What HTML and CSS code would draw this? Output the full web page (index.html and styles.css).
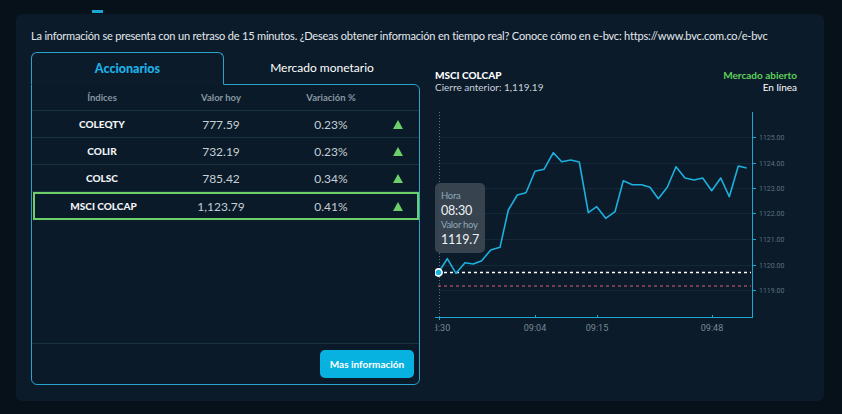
FILE: index.html
```html
<!DOCTYPE html>
<html lang="es">
<head>
<meta charset="utf-8">
<title>BVC índices</title>
<link rel="stylesheet" href="styles.css">
</head>
<body>
<div class="topbar"><span class="indicator"></span></div>
<section class="card">
  <p class="notice">La información se presenta con un retraso de 15 minutos. ¿Deseas obtener información en tiempo real? Conoce cómo en e-bvc: https://www.bvc.com.co/e-bvc</p>
  <div class="content">
    <div class="left">
      <div class="tabs">
        <div class="tab active">Accionarios</div>
        <div class="tab">Mercado monetario</div>
      </div>
      <div class="panel">
        <div class="table">
          <div class="row head">
            <span>Índices</span><span>Valor hoy</span><span>Variación %</span><span></span>
          </div>
          <div class="row">
            <span class="name">COLEQTY</span><span class="num">777.59</span><span class="num">0.23%</span><span class="up"></span>
          </div>
          <div class="row">
            <span class="name">COLIR</span><span class="num">732.19</span><span class="num">0.23%</span><span class="up"></span>
          </div>
          <div class="row">
            <span class="name">COLSC</span><span class="num">785.42</span><span class="num">0.34%</span><span class="up"></span>
          </div>
          <div class="row selected">
            <span class="name">MSCI COLCAP</span><span class="num">1,123.79</span><span class="num">0.41%</span><span class="up"></span>
          </div>
        </div>
        <div class="panel-footer">
          <button class="more">Mas información</button>
        </div>
      </div>
    </div>
    <div class="right">
      <div class="chart-head">
        <div>
          <div class="title">MSCI COLCAP</div>
          <div class="sub">Cierre anterior: 1,119.19</div>
        </div>
        <div class="status">
          <div class="open">Mercado abierto</div>
          <div class="sub white">En línea</div>
        </div>
      </div>
      <div class="chart">
        <svg class="plot" width="362" height="250" viewBox="435 100 362 250" xmlns="http://www.w3.org/2000/svg">
          <defs>
            <clipPath id="xclip"><rect x="435.5" y="318" width="400" height="30"/></clipPath>
          </defs>
          <g stroke="#13293a" stroke-width="1">
            <line x1="438" y1="137.5" x2="752" y2="137.5"/>
            <line x1="438" y1="163.5" x2="752" y2="163.5"/>
            <line x1="438" y1="188.5" x2="752" y2="188.5"/>
            <line x1="438" y1="213.5" x2="752" y2="213.5"/>
            <line x1="438" y1="239.5" x2="752" y2="239.5"/>
            <line x1="438" y1="265.5" x2="752" y2="265.5"/>
            <line x1="438" y1="290.5" x2="752" y2="290.5"/>
          </g>
          <line x1="439.5" y1="112" x2="439.5" y2="317" stroke="#5d6e7c" stroke-width="1" stroke-dasharray="1 2"/>
          <line x1="752.5" y1="112" x2="752.5" y2="317.5" stroke="#1ea6d1" stroke-width="1"/>
          <line x1="435" y1="317.5" x2="753" y2="317.5" stroke="#1ea6d1" stroke-width="1"/>
          <g stroke="#1ea6d1" stroke-width="1">
            <line x1="752" y1="137.5" x2="756" y2="137.5"/>
            <line x1="752" y1="163.5" x2="756" y2="163.5"/>
            <line x1="752" y1="188.5" x2="756" y2="188.5"/>
            <line x1="752" y1="213.5" x2="756" y2="213.5"/>
            <line x1="752" y1="239.5" x2="756" y2="239.5"/>
            <line x1="752" y1="265.5" x2="756" y2="265.5"/>
            <line x1="752" y1="290.5" x2="756" y2="290.5"/>
            <line x1="439.5" y1="317" x2="439.5" y2="320"/>
            <line x1="535.5" y1="315" x2="535.5" y2="317"/>
            <line x1="597.5" y1="315" x2="597.5" y2="317"/>
            <line x1="712.5" y1="315" x2="712.5" y2="317"/>
          </g>
          <g class="ylab">
            <text x="759" y="140">1125.00</text>
            <text x="759" y="166">1124.00</text>
            <text x="759" y="191">1123.00</text>
            <text x="759" y="216">1122.00</text>
            <text x="759" y="242">1121.00</text>
            <text x="759" y="268">1120.00</text>
            <text x="759" y="293">1119.00</text>
          </g>
          <g class="xlab">
            <text x="439" y="331" clip-path="url(#xclip)" text-anchor="middle">08:30</text>
            <text x="535" y="331" text-anchor="middle">09:04</text>
            <text x="597" y="331" text-anchor="middle">09:15</text>
            <text x="712" y="331" text-anchor="middle">09:48</text>
          </g>
          <line x1="438" y1="286" x2="751" y2="286" stroke="#e2627f" stroke-width="1" stroke-dasharray="3 3"/>
          <line x1="438" y1="272.5" x2="751" y2="272.5" stroke="#ffffff" stroke-width="1.6" stroke-dasharray="3 3"/>
          <polyline fill="none" stroke="#1cb0de" stroke-width="1.6" stroke-linejoin="round"
            points="438.3,272.7 447.3,258.7 456,273.3 465,262.7 473.3,264 481.7,260.7 490.7,250 500,247.3 508.3,210 517.3,195 526,192.7 535,171.3 544,169.3 553.3,152.7 561.7,161.7 570.7,160 579.3,162 588.3,212.7 596.7,206.7 605.7,218.3 615,211.7 623.3,180.7 632.3,184.7 641.7,184.7 650,187.3 658.3,198.7 667.3,187.3 676,166.7 685,178 694,180 702.7,178 711.7,190.7 720.7,178 729.3,196.7 738.3,166 746.7,168"/>
          <circle cx="438.5" cy="272.5" r="3.6" fill="#1cb0de" stroke="#ffffff" stroke-width="1.6"/>
        </svg>
        <div class="tooltip">
          <div class="tt-label">Hora</div>
          <div class="tt-value">08:30</div>
          <div class="tt-label">Valor hoy</div>
          <div class="tt-value">1119.7</div>
        </div>
      </div>
    </div>
  </div>
</section>
</body>
</html>
```

FILE: styles.css
```css
* { box-sizing: border-box; }

html, body {
  margin: 0;
  padding: 0;
  background: #06111a;
  width: 842px;
  height: 414px;
  overflow: hidden;
  font-family: "Lato", "Open Sans", sans-serif;
  color: #e6ebef;
}

.topbar {
  height: 14px;
  padding-left: 92px;
  padding-top: 10px;
}

.indicator {
  display: block;
  width: 11px;
  height: 3px;
  background: #1aa7d6;
}

.card {
  margin-left: 16px;
  width: 808px;
  height: 387px;
  background: #0b1b2a;
  border-radius: 6px;
  padding: 14px 15px 0 15px;
}

.notice {
  margin: 0;
  font-size: 11.05px;
  letter-spacing: -0.2px;
  line-height: 16px;
  color: #e3e8ec;
  font-weight: 400;
  white-space: nowrap;
}

.content {
  display: flex;
  gap: 15px;
  margin-top: 8px;
}

.left {
  width: 389px;
  display: flex;
  flex-direction: column;
}

.tabs {
  display: flex;
  height: 32px;
}

.tab {
  display: flex;
  align-items: center;
  justify-content: center;
  font-size: 12px;
  color: #ffffff;
}

.tab.active {
  width: 193px;
  border: 1px solid #2aa4cf;
  border-bottom: 1px solid #0b1b2a;
  border-radius: 6px 6px 0 0;
  background: #0b1b2a;
  color: #1eb0e6;
  font-weight: 900;
  font-size: 12.5px;
  position: relative;
  z-index: 1;
  height: 33px;
}

.tab:not(.active) {
  flex: 1;
  padding-bottom: 1px;
}

.panel {
  height: 301px;
  border: 1px solid #2aa4cf;
  border-radius: 0 6px 6px 6px;
  background: #0a1a28;
  display: flex;
  flex-direction: column;
}

.table {
  flex: 1;
}

.row {
  display: grid;
  grid-template-columns: 140px 98px 122px 1fr;
  align-items: center;
  height: 27px;
  border-bottom: 1px solid #1b3243;
  text-align: center;
}

.row.head {
  height: 26px;
  font-size: 9.5px;
  font-weight: 700;
  color: #8797a3;
}

.row.selected {
  height: 28px;
  border: 2px solid #6ccf6a;
  margin: 0 0 0 1px;
  grid-template-columns: 137px 98px 122px 1fr;
}

.name {
  font-size: 10px;
  font-weight: 900;
  color: #f2f4f6;
}

.num {
  font-size: 12px;
  color: #c6ced5;
  font-weight: 400;
}

.up {
  justify-self: start;
  margin-left: 1px;
  width: 0;
  height: 0;
  border-left: 5px solid transparent;
  border-right: 5px solid transparent;
  border-bottom: 9px solid #6ccf6a;
}

.panel-footer {
  height: 41px;
  border-top: 1px solid #1b3243;
  display: flex;
  justify-content: flex-end;
  align-items: flex-start;
  padding: 6px 5px 0 0;
}

.more {
  width: 94px;
  height: 28px;
  border: 0;
  border-radius: 5px;
  background: #07b2e1;
  color: #ffffff;
  font-family: "Lato", sans-serif;
  font-size: 10px;
  font-weight: 700;
  padding: 0;
}

.right {
  width: 362px;
  padding-top: 17px;
}

.chart-head {
  display: flex;
  justify-content: space-between;
  font-size: 10px;
  line-height: 12px;
}

.title {
  font-weight: 900;
  color: #ffffff;
}

.sub {
  color: #c9d1d8;
}

.sub.white {
  color: #ffffff;
}

.status {
  text-align: right;
}

.open {
  font-weight: 700;
  color: #5fcf5c;
}

.chart {
  position: relative;
  margin-top: 7px;
  height: 250px;
}

.plot {
  display: block;
}

.ylab text {
  font-family: "Roboto", sans-serif;
  font-size: 7px;
  fill: #5f7080;
}

.xlab text {
  font-family: "Roboto", sans-serif;
  font-size: 9px;
  fill: #7a8894;
}

.tooltip {
  position: absolute;
  left: 0;
  top: 83px;
  width: 50px;
  height: 70px;
  background: rgba(60, 71, 82, 0.92);
  border-radius: 5px;
  padding: 6px 0 0 6px;
}

.tt-label {
  font-size: 9.5px;
  letter-spacing: -0.3px;
  line-height: 14px;
  color: #8fa8ba;
}

.tt-value {
  font-size: 12.5px;
  letter-spacing: -0.2px;
  line-height: 15px;
  color: #eef2f5;
}
```
